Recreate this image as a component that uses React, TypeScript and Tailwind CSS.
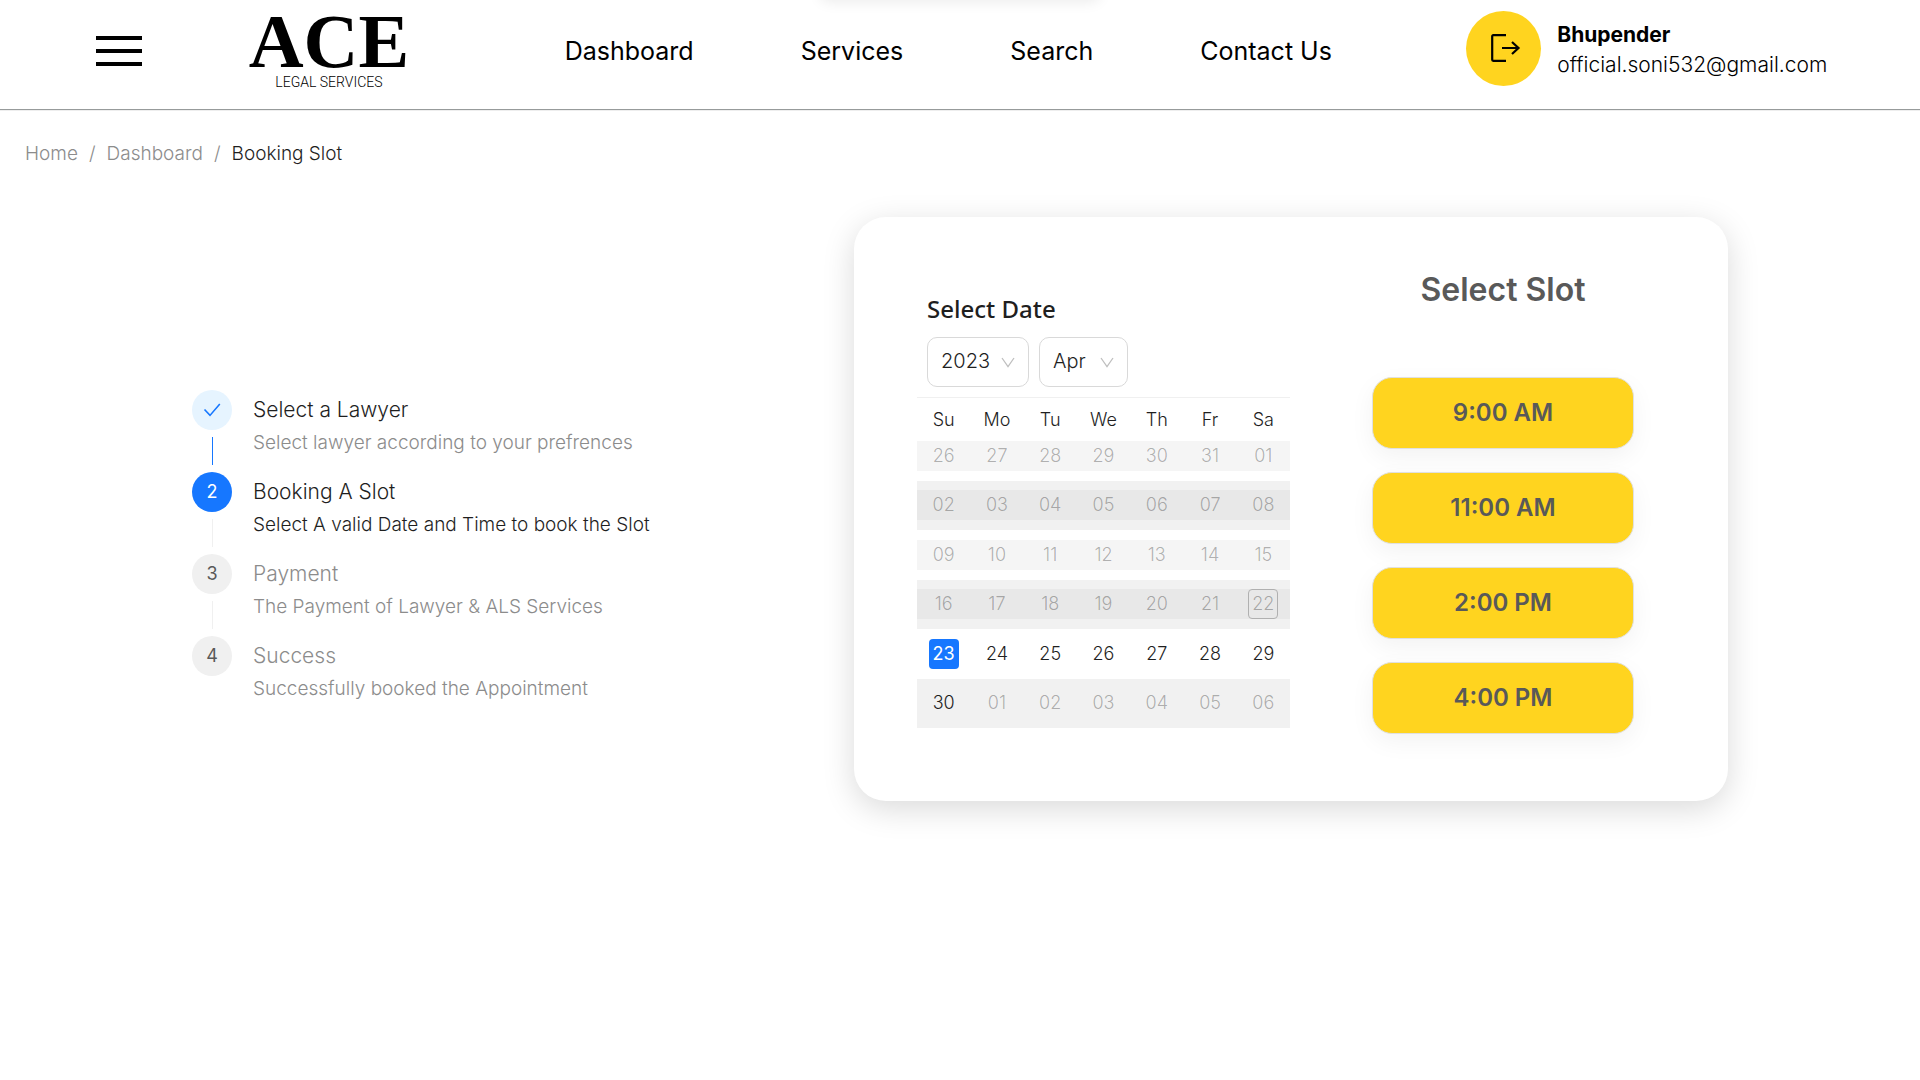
import React from "react";

const navLinks = ["Dashboard", "Services", "Search", "Contact Us"];

type StepState = "done" | "active" | "waiting";

const steps: { title: string; text: string; state: StepState }[] = [
  { title: "Select a Lawyer", text: "Select lawyer according to your prefrences", state: "done" },
  { title: "Booking A Slot", text: "Select A valid Date and Time to book the Slot", state: "active" },
  { title: "Payment", text: "The Payment of Lawyer & ALS Services", state: "waiting" },
  { title: "Success", text: "Successfully booked the Appointment", state: "waiting" },
];

const circleStyles: Record<StepState, string> = {
  done: "bg-[#e6f4ff] text-[#1677ff]",
  active: "bg-[#1677ff] text-white",
  waiting: "bg-[#f0f0f0] text-[#595959]",
};
const titleStyles: Record<StepState, string> = {
  done: "text-[#1f1f1f]",
  active: "text-[#1f1f1f]",
  waiting: "text-[#8c8c8c]",
};
const textStyles: Record<StepState, string> = {
  done: "text-[#8c8c8c]",
  active: "text-[#1f1f1f]",
  waiting: "text-[#8c8c8c]",
};

const weekDays = ["Su", "Mo", "Tu", "We", "Th", "Fr", "Sa"];
const weeks = [
  ["26", "27", "28", "29", "30", "31", "01"],
  ["02", "03", "04", "05", "06", "07", "08"],
  ["09", "10", "11", "12", "13", "14", "15"],
  ["16", "17", "18", "19", "20", "21", "22"],
  ["23", "24", "25", "26", "27", "28", "29"],
  ["30", "01", "02", "03", "04", "05", "06"],
];
const slots = ["9:00 AM", "11:00 AM", "2:00 PM", "4:00 PM"];

function Header() {
  return (
    <header className="relative grid h-[109px] grid-cols-[153fr_316fr_902fr_454fr] items-center pb-[7px] pl-[5%]">
      <div
        aria-hidden="true"
        className="absolute bottom-full left-1/2 h-10 w-[280px] -translate-x-1/2 rounded-lg shadow-[0_2px_14px_rgba(0,0,0,0.08)]"
      />
      <button type="button" aria-label="Menu" className="flex w-[46px] flex-col gap-[9px]">
        <span className="h-1 w-full bg-black" />
        <span className="h-1 w-full bg-black" />
        <span className="h-1 w-full bg-black" />
      </button>
      <a href="#home" className="flex w-40 flex-col items-center text-black">
        <span className="font-['Liberation_Serif',serif] text-[76px] leading-[62px] font-bold">ACE</span>
        <span className="font-[Roboto,sans-serif] text-sm leading-5 font-light whitespace-nowrap">LEGAL SERVICES</span>
      </a>
      <nav className="flex gap-[107px] text-[25px] leading-9 whitespace-nowrap text-black">
        {navLinks.map((link) => (
          <a key={link} href="#nav">
            {link}
          </a>
        ))}
      </nav>
      <div className="flex items-center gap-4 pb-[6px] text-[21px] leading-[30px] text-black">
        <button
          type="button"
          aria-label="Log out"
          className="flex size-[75px] shrink-0 items-center justify-center rounded-full bg-[#ffd41f]"
        >
          <svg width="34" height="28" viewBox="0 0 34 28" fill="none" stroke="currentColor" strokeWidth="2.2">
            <path d="M19 1.2H6.2a1 1 0 0 0-1 1v23.6a1 1 0 0 0 1 1H19" />
            <path d="M15 14h17M25 8l6.5 6-6.5 6" />
          </svg>
        </button>
        <div className="pt-1">
          <p className="font-bold">Bhupender</p>
          <p className="font-light">official.soni532@gmail.com</p>
        </div>
      </div>
    </header>
  );
}

function Steps() {
  return (
    <ol className="pt-[173px]">
      {steps.map((step, i) => (
        <li key={step.title} className="flex gap-[21px]">
          <div className="flex flex-col items-center">
            <span
              className={`flex size-10 items-center justify-center rounded-full text-lg ${circleStyles[step.state]}`}
            >
              {step.state === "done" ? (
                <svg width="18" height="14" viewBox="0 0 18 14" fill="none" stroke="currentColor" strokeWidth="1.6">
                  <path d="M1.5 6.5 7 12.4 16.8 1" />
                </svg>
              ) : (
                i + 1
              )}
            </span>
            {i < steps.length - 1 && (
              <span className={`my-[7px] h-7 w-px ${step.state === "done" ? "bg-[#1677ff]" : "bg-[#f0f0f0]"}`} />
            )}
          </div>
          <div>
            <p className={`text-[21px] leading-10 font-light ${titleStyles[step.state]}`}>{step.title}</p>
            <p className={`text-[19px] leading-[26px] font-light ${textStyles[step.state]}`}>{step.text}</p>
          </div>
        </li>
      ))}
    </ol>
  );
}

function Picker({ label, value, width }: { label: string; value: string; width: string }) {
  return (
    <div className={`relative ${width}`}>
      <select
        aria-label={label}
        defaultValue={value}
        className="h-[50px] w-full appearance-none rounded-[10px] border border-[#d9d9d9] bg-white pb-[2px] pl-[13px] text-xl font-light text-[#1f1f1f]"
      >
        <option>{value}</option>
      </select>
      <svg
        className="pointer-events-none absolute top-5 right-[14px] text-[#bfbfbf]"
        width="14"
        height="11"
        viewBox="0 0 14 11"
        fill="none"
        stroke="currentColor"
        strokeWidth="1.3"
      >
        <path d="M1 1l6 8.5L13 1" />
      </svg>
    </div>
  );
}

function Calendar() {
  return (
    <section className="mt-[72px] w-[373px]">
      <h2 className="px-[10px] font-['Noto_Sans',sans-serif] text-2xl leading-10 font-medium text-[#1f1f1f]">Select Date</h2>
      <div className="mt-2 mb-[10px] flex gap-[10px] px-[10px]">
        <Picker label="Year" value="2023" width="w-[102px]" />
        <Picker label="Month" value="Apr" width="w-[89px]" />
      </div>
      <table className="h-[331px] w-full table-fixed border-t border-[#f0f0f0] text-center text-lg leading-[30px] font-light text-[#1f1f1f]">
        <thead>
          <tr>
            {weekDays.map((day) => (
              <th key={day} scope="col" className="h-[33px] pt-[10px] pb-0 leading-[23px] font-light">
                {day}
              </th>
            ))}
          </tr>
        </thead>
        <tbody>
          {weeks.map((week, w) => (
            <tr key={w} className="even:bg-[#f1f1f1]">
              {week.map((day, d) => {
                const past = w < 4;
                const disabled = past || (w === 5 && d > 0);
                const bar = past ? (w % 2 ? "bg-[#e8e8e8]" : "bg-[#f5f5f5]") : "";
                const mark =
                  w === 3 && d === 6
                    ? "rounded border border-[#b0b0b0] leading-7"
                    : w === 4 && d === 0
                      ? "rounded bg-[#1677ff] font-normal text-white"
                      : "";
                return (
                  <td key={d} className="p-0">
                    <div className={`flex justify-center ${bar}`}>
                      <button
                        type="button"
                        disabled={disabled}
                        className={`size-[30px] ${disabled ? "text-black/30" : ""} ${mark}`}
                      >
                        {day}
                      </button>
                    </div>
                  </td>
                );
              })}
            </tr>
          ))}
        </tbody>
      </table>
    </section>
  );
}

function Slots() {
  return (
    <section className="mt-12 flex w-[262px] flex-col text-center font-semibold text-[#595959]">
      <h2 className="text-[32px] leading-[50px]">Select Slot</h2>
      <div className="mt-[62px] flex flex-col gap-[23px]">
        {slots.map((slot) => (
          <button
            key={slot}
            type="button"
            className="h-[72px] rounded-[20px] border border-[#e0e0e0] bg-[#ffd41f] text-2xl shadow-[0_8px_24px_rgba(0,0,0,0.05)]"
          >
            {slot}
          </button>
        ))}
      </div>
    </section>
  );
}

export default function App() {
  return (
    <div className="min-h-screen bg-white font-[Inter,sans-serif]">
      <Header />
      <hr className="h-[2px] border-t border-b border-t-[#979b9b] border-b-[#eeeeee]" />
      <nav aria-label="Breadcrumb" className="px-[25px] pt-[29px] text-[19px] leading-7 font-light text-[#8c8c8c]">
        <ol className="flex gap-[11px]">
          <li>
            <a href="#home">Home</a>
          </li>
          <li aria-hidden="true">/</li>
          <li>
            <a href="#dashboard">Dashboard</a>
          </li>
          <li aria-hidden="true">/</li>
          <li className="text-[#1f1f1f]">Booking Slot</li>
        </ol>
      </nav>
      <main className="mt-[49px] flex items-start justify-between gap-8 px-[10%]">
        <Steps />
        <div className="flex items-start gap-[82px] rounded-[32px] bg-white pr-[94px] pb-[67px] pl-[63px] shadow-[0_8px_32px_rgba(0,0,0,0.15)]">
          <Calendar />
          <Slots />
        </div>
      </main>
    </div>
  );
}
